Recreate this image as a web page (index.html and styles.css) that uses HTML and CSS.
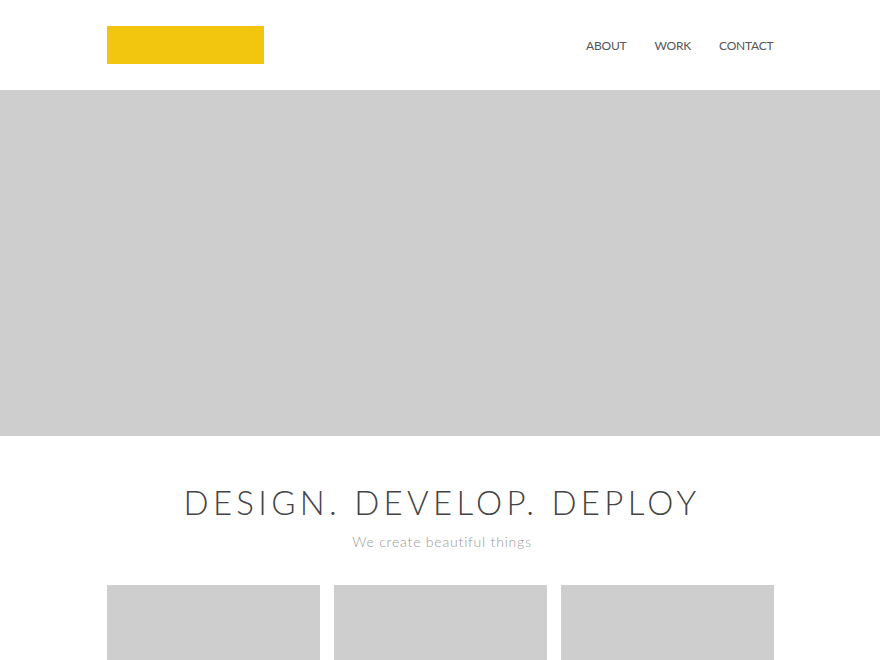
FILE: index.html
```html
<!DOCTYPE html>
<html lang="en">
<head>
<meta charset="utf-8">
<title>Design. Develop. Deploy</title>
<link rel="stylesheet" href="styles.css">
</head>
<body>
<header class="site-header">
  <div class="container header-inner">
    <a class="logo" href="#" aria-label="Logo"></a>
    <nav class="nav">
      <a href="#">ABOUT</a>
      <a href="#">WORK</a>
      <a href="#">CONTACT</a>
    </nav>
  </div>
</header>
<section class="hero"></section>
<section class="intro">
  <h1 class="title">DESIGN. DEVELOP. DEPLOY</h1>
  <p class="subtitle">We create beautiful things</p>
</section>
<section class="container cards">
  <div class="card"></div>
  <div class="card"></div>
  <div class="card"></div>
</section>
</body>
</html>
```
FILE: styles.css
```css
* { box-sizing: border-box; }
html, body { margin: 0; padding: 0; background: #fff; }
body { font-family: "Lato", "Noto Sans", sans-serif; color: #444; }

.container { width: 667px; margin: 0 auto; }

.site-header { height: 90px; }
.header-inner {
  height: 100%;
  display: flex;
  align-items: center;
  justify-content: space-between;
}
.logo {
  display: block;
  width: 157px;
  height: 38px;
  background: #f2c50f;
}
.nav { display: flex; gap: 28px; }
.nav a {
  color: #555;
  text-decoration: none;
  font-size: 12px;
  letter-spacing: -0.2px;
}

.hero { height: 346px; background: #cecece; }

.intro { text-align: center; padding-top: 46px; padding-left: 4px; }
.title {
  margin: 0;
  font-weight: 300;
  font-size: 33px;
  letter-spacing: 4.3px;
  line-height: 40px;
  color: #444;
}
.subtitle {
  margin: 11px 0 0;
  font-weight: 300;
  font-size: 14px;
  letter-spacing: 0.8px;
  color: #999;
}

.cards {
  display: grid;
  grid-template-columns: repeat(3, 1fr);
  gap: 14px;
  margin-top: 35px;
}
.card { height: 220px; background: #cecece; }
```
